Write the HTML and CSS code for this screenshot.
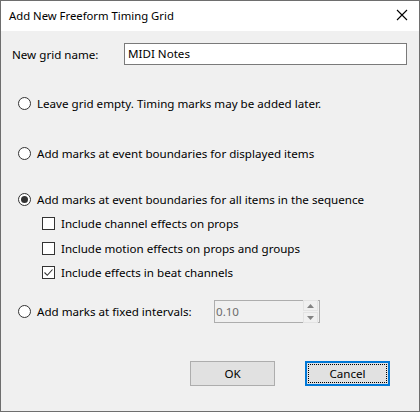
FILE: index.html
```html
<!DOCTYPE html>
<html>
<head>
<meta charset="utf-8">
<link rel="stylesheet" href="styles.css">
</head>
<body>
<div class="window">
  <div class="titlebar">
    <span class="title">Add New Freeform Timing Grid</span>
    <svg class="close" width="12" height="12" viewBox="0 0 12 12"><path d="M1 1 L11 11 M11 1 L1 11" stroke="#000" stroke-width="1.1" fill="none"/></svg>
  </div>
  <div class="content">
    <div class="name-row">
      <span class="label">New grid name:</span>
      <div class="textbox">MIDI Notes</div>
    </div>
    <div class="opt r1"><span class="radio"></span><span>Leave grid empty. Timing marks may be added later.</span></div>
    <div class="opt r2"><span class="radio"></span><span>Add marks at event boundaries for displayed items</span></div>
    <div class="opt r3"><span class="radio checked"></span><span>Add marks at event boundaries for all items in the sequence</span></div>
    <div class="opt sub c1"><span class="check"></span><span>Include channel effects on props</span></div>
    <div class="opt sub c2"><span class="check"></span><span>Include motion effects on props and groups</span></div>
    <div class="opt sub c3"><span class="check"><svg width="11" height="11" viewBox="0 0 11 11"><path d="M1.5 5.5 L4.3 8.3 L9.5 2.5" stroke="#333" stroke-width="1.1" fill="none"/></svg></span><span>Include effects in beat channels</span></div>
    <div class="opt r4">
      <span class="radio"></span><span class="r4-label">Add marks at fixed intervals:</span>
      <div class="spin">
        <span class="spin-val">0.10</span>
        <div class="spin-btns">
          <div class="sb"><svg width="7" height="4" viewBox="0 0 7 4"><path d="M0 4 L3.5 0 L7 4 Z" fill="#838383"/></svg></div>
          <div class="sb"><svg width="7" height="4" viewBox="0 0 7 4"><path d="M0 0 L3.5 4 L7 0 Z" fill="#838383"/></svg></div>
        </div>
      </div>
    </div>
    <div class="buttons">
      <div class="btn">OK</div>
      <div class="btn default"><div class="focus">Cancel</div></div>
    </div>
  </div>
</div>
</body>
</html>
```
FILE: styles.css
```css
html, body {
  margin: 0;
  padding: 0;
  background: #f0f0f0;
}
.window {
  width: 420px;
  height: 412px;
  box-sizing: border-box;
  border: 1px solid #6e6e6e;
  background: #f0f0f0;
  font-family: "Noto Sans", "Liberation Sans", sans-serif;
  font-size: 11.6px;
  color: #000;
  display: flex;
  flex-direction: column;
}
.titlebar {
  height: 30px;
  background: #fff;
  display: flex;
  align-items: center;
  justify-content: space-between;
  padding: 0 8px 0 8px;
  flex: none;
}
.title {
  font-size: 11.3px;
  margin-top: -1px;
}
.close {
  margin-right: 3px;
  margin-top: -2px;
}
.content {
  flex: 1;
  padding: 0 0 0 11px;
}
.name-row {
  margin-top: 12px;
  height: 22px;
  display: flex;
  align-items: center;
}
.label {
  width: 112px;
  flex: none;
}
.textbox {
  width: 283px;
  height: 22px;
  box-sizing: border-box;
  border: 1px solid #7a7a7a;
  background: #fff;
  padding-left: 3px;
  line-height: 20px;
  flex: none;
}
.opt {
  height: 20px;
  display: flex;
  align-items: center;
  padding-left: 6px;
}
.r1 { margin-top: 28px; }
.r2 { margin-top: 30px; }
.r3 { margin-top: 26px; }
.c1 { margin-top: 4px; }
.c2 { margin-top: 5px; }
.c3 { margin-top: 4px; }
.sub { padding-left: 30px; }
.radio {
  width: 13px;
  height: 13px;
  box-sizing: border-box;
  border: 1px solid #333;
  border-radius: 50%;
  background: #fff;
  margin-right: 6px;
  display: flex;
  align-items: center;
  justify-content: center;
  flex: none;
}
.radio.checked::after {
  content: "";
  width: 7px;
  height: 7px;
  border-radius: 50%;
  background: #333;
}
.check {
  width: 13px;
  height: 13px;
  box-sizing: border-box;
  border: 1px solid #333;
  background: #fff;
  margin-right: 6px;
  display: flex;
  align-items: center;
  justify-content: center;
  flex: none;
}
.r4 {
  margin-top: 18px;
  height: 23px;
}
.r4-label {
  width: 177px;
  flex: none;
}
.spin {
  width: 106px;
  height: 23px;
  box-sizing: border-box;
  border: 1px solid #adadad;
  background: #f0f0f0;
  display: flex;
  align-items: center;
  justify-content: space-between;
  padding: 0 1px 0 1px;
  flex: none;
}
.spin-val {
  color: #6d6d6d;
}
.spin-btns {
  display: flex;
  flex-direction: column;
  gap: 1px;
  width: 15px;
}
.sb {
  height: 9px;
  background: #f0f0f0;
  border: 1px solid #e3e3e3;
  display: flex;
  align-items: center;
  justify-content: center;
}
.buttons {
  margin-top: 38px;
  display: flex;
  justify-content: flex-end;
  gap: 30px;
  padding-right: 29px;
}
.btn {
  width: 85px;
  height: 25px;
  box-sizing: border-box;
  border: 1px solid #adadad;
  background: #e1e1e1;
  display: flex;
  align-items: center;
  justify-content: center;
}
.btn.default {
  border: 2px solid #0078d7;
  padding: 1px;
}
.focus {
  width: 100%;
  height: 100%;
  box-sizing: border-box;
  border: 1px dotted #000;
  display: flex;
  align-items: center;
  justify-content: center;
}
```
